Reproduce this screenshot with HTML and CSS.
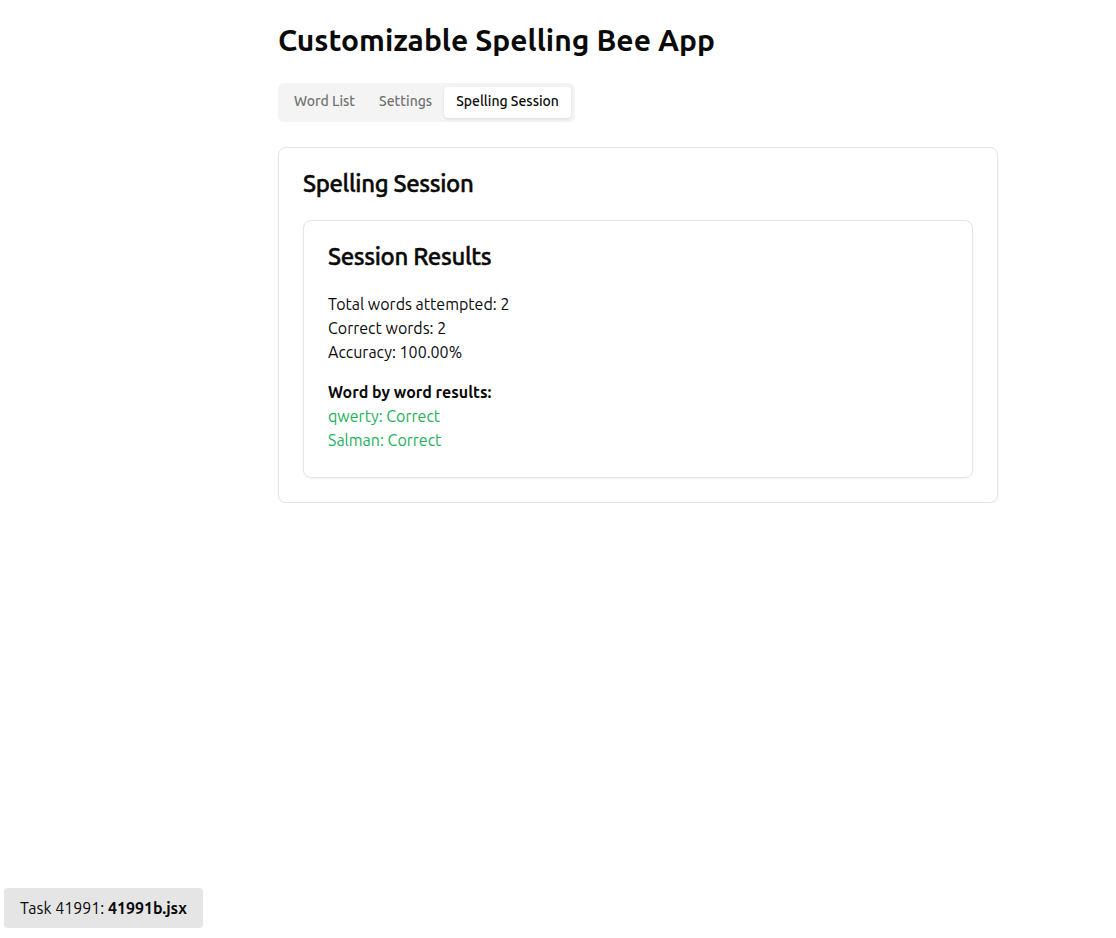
FILE: index.html
```html
<!DOCTYPE html>
<html>
<head>
<meta charset="utf-8">
<link rel="stylesheet" href="styles.css">
</head>
<body>
<main class="app">
  <h1 class="title">Customizable Spelling Bee App</h1>
  <div class="tabs">
    <button class="tab">Word List</button>
    <button class="tab">Settings</button>
    <button class="tab active">Spelling Session</button>
  </div>
  <section class="card">
    <h2 class="card-title">Spelling Session</h2>
    <div class="card inner">
      <h3 class="card-title">Session Results</h3>
      <p class="line">Total words attempted: 2</p>
      <p class="line">Correct words: 2</p>
      <p class="line">Accuracy: 100.00%</p>
      <div class="words">
        <p class="line bold">Word by word results:</p>
        <p class="line ok">qwerty: Correct</p>
        <p class="line ok">Salman: Correct</p>
      </div>
    </div>
  </section>
</main>
<div class="badge">Task 41991: <b>41991b.jsx</b></div>
</body>
</html>
```
FILE: styles.css
```css
* { box-sizing: border-box; }
body {
  margin: 0;
  font-family: "Ubuntu", "Noto Sans", sans-serif;
  color: #0a0a0a;
  background: #fff;
}
.app {
  width: 720px;
  margin-left: 278px;
  padding-top: 20px;
}
.title {
  margin: 0;
  font-size: 30px;
  line-height: 40px;
  font-weight: 700;
}
.tabs {
  display: inline-flex;
  margin-top: 23px;
  padding: 4px;
  background: #f4f4f4;
  border-radius: 6px;
}
.tab {
  border: 0;
  background: transparent;
  font: inherit;
  font-size: 14px;
  font-weight: 500;
  line-height: 20px;
  color: #737373;
  padding: 4px 12px 7px;
  border-radius: 4px;
}
.tab.active {
  background: #fff;
  color: #0a0a0a;
  box-shadow: 0 1px 3px rgba(0,0,0,0.1);
}
.card {
  margin-top: 25px;
  border: 1px solid #e5e5e5;
  border-radius: 8px;
  padding: 24px;
  box-shadow: 0 1px 2px rgba(0,0,0,0.05);
}
.card-title {
  margin: 0 0 24px;
  font-size: 24px;
  line-height: 24px;
  font-weight: 500;
  letter-spacing: -0.015em;
  -webkit-text-stroke: 0.45px currentColor;
}
.inner { margin-top: 0; padding-bottom: 25px; }
.inner .card-title { margin-bottom: 23px; }
.line {
  margin: 0;
  font-size: 16px;
  line-height: 24px;
}
.words { margin-top: 16px; }
.bold { font-weight: 700; }
.ok { color: #22b05a; }
.badge {
  position: fixed;
  left: 4px;
  bottom: 10px;
  background: #e5e5e5;
  border-radius: 4px;
  padding: 0 16px;
  height: 40px;
  line-height: 40px;
  font-size: 16px;
}
```
